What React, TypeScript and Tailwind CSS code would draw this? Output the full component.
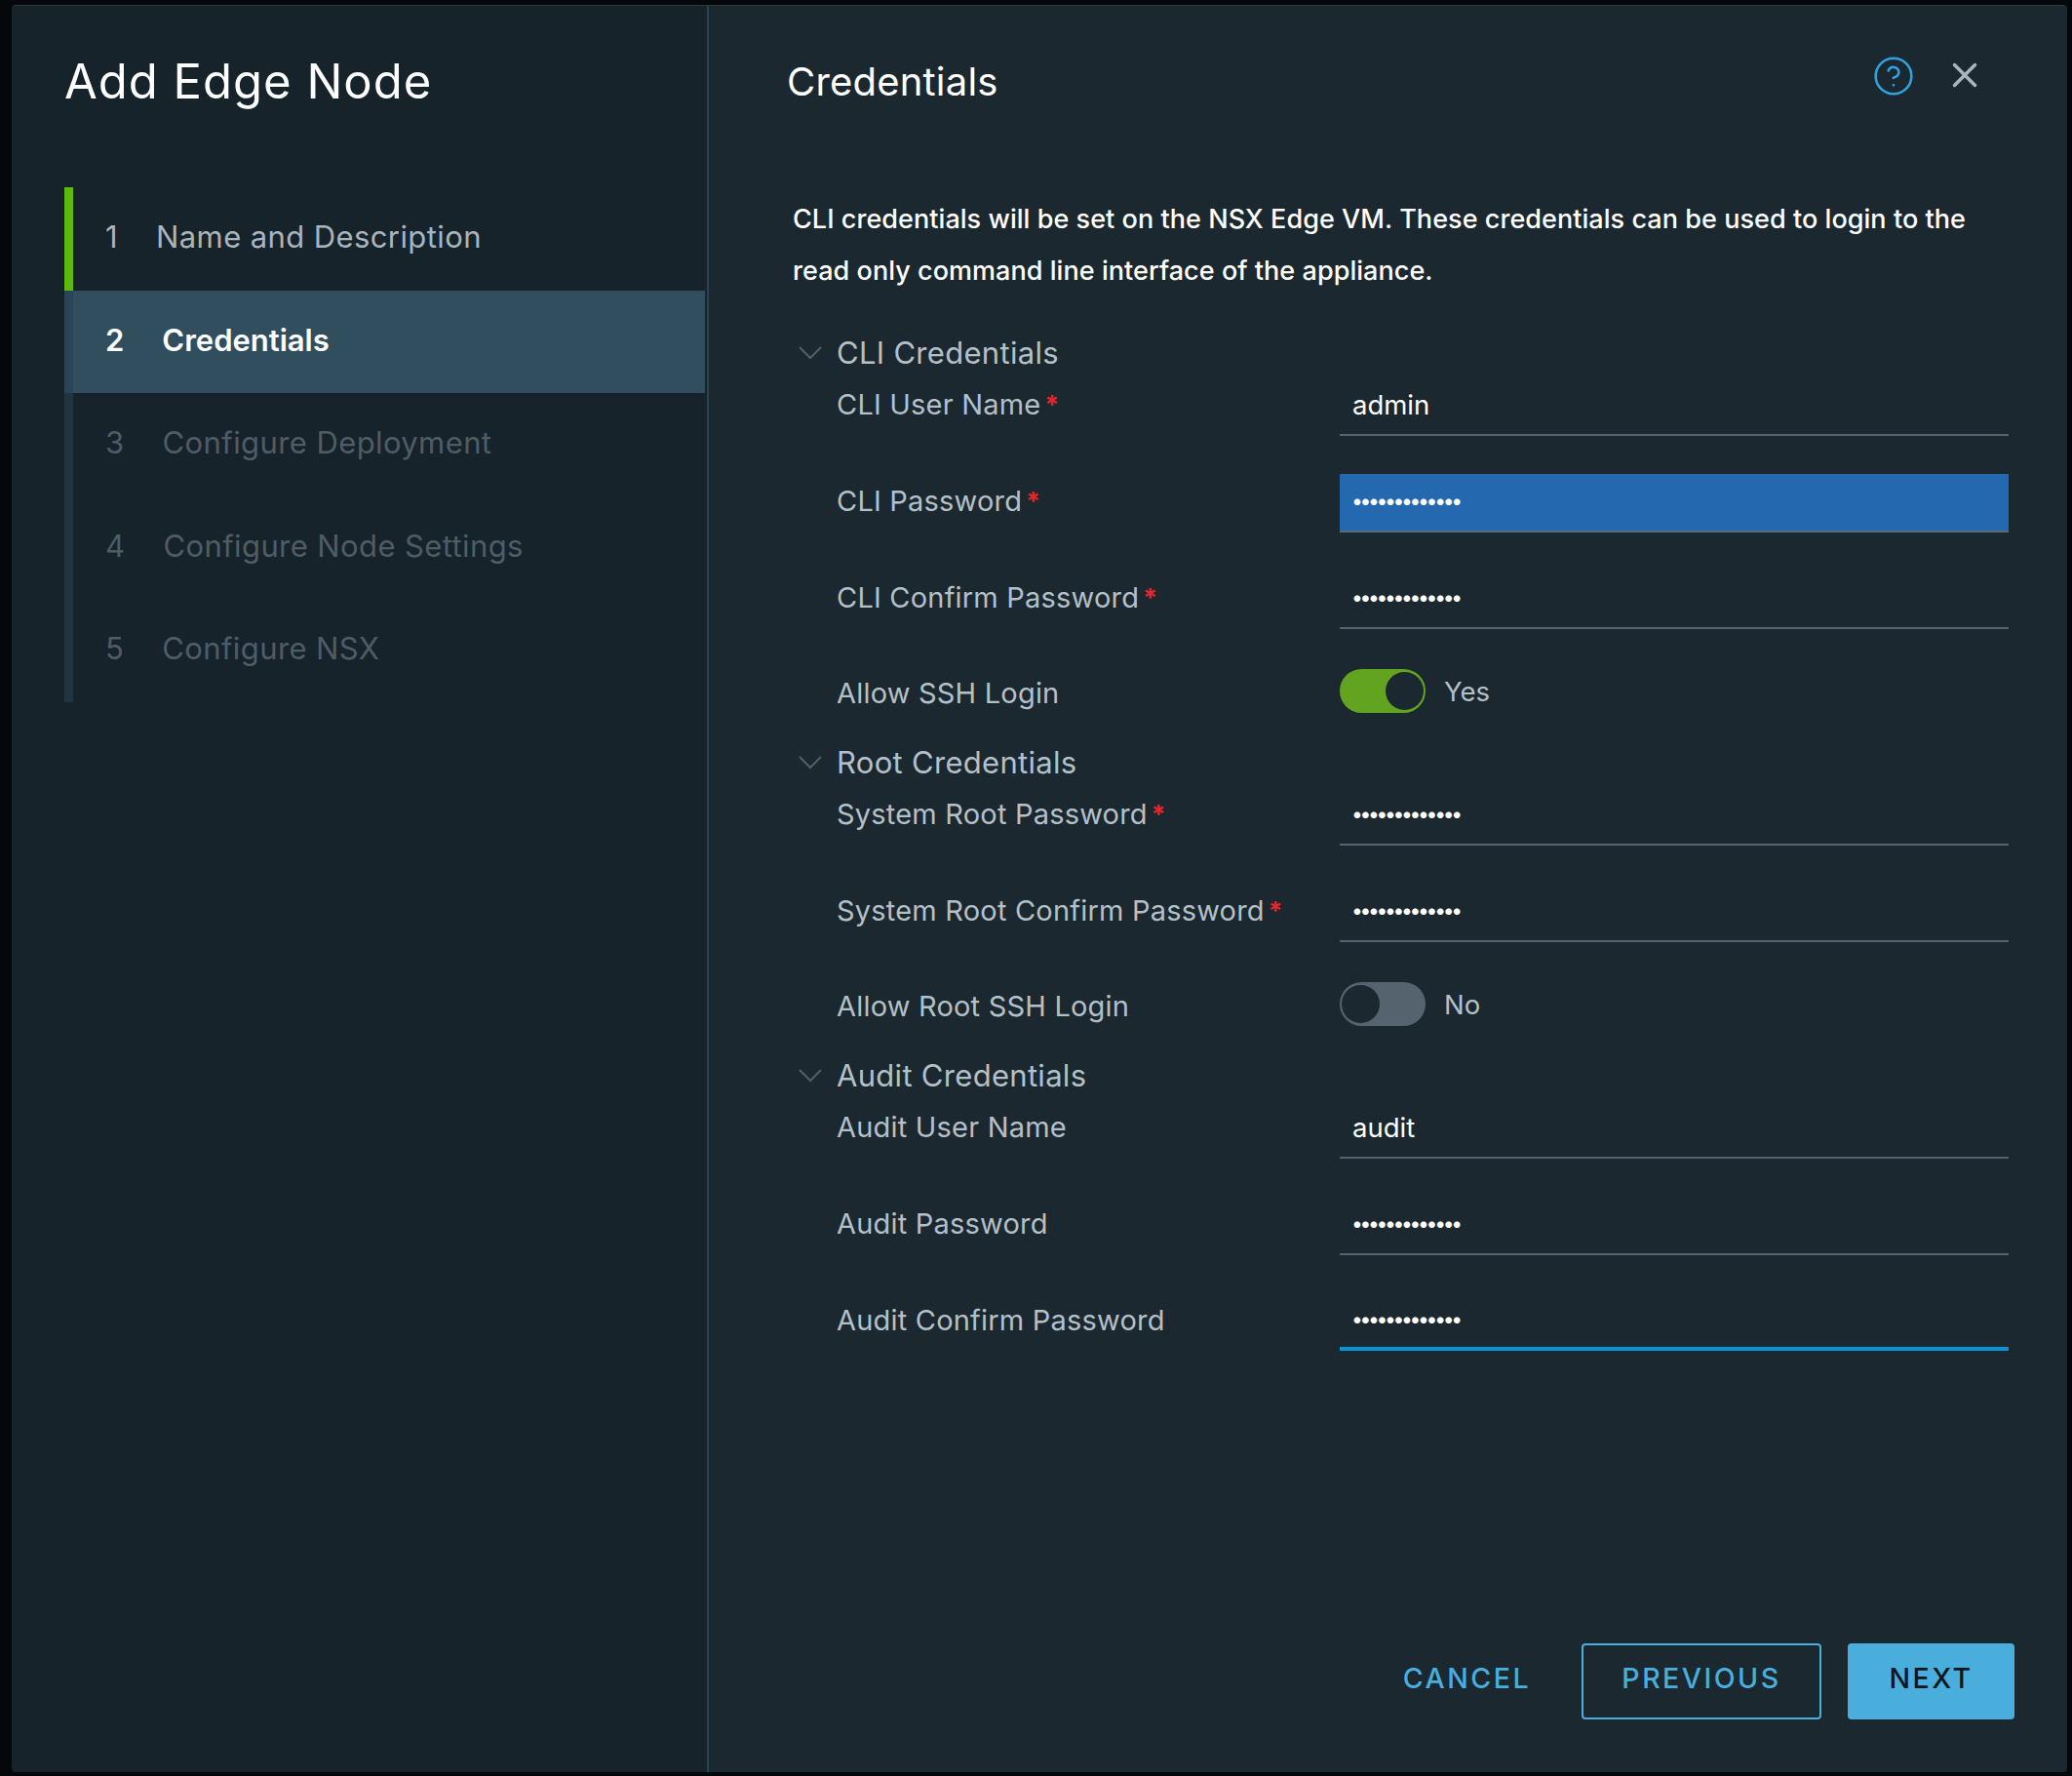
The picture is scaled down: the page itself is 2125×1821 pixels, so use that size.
import React from "react";
import { CircleHelp, X } from "lucide-react";

const steps = [
  { n: "1", label: "Name and Description", state: "done" },
  { n: "2", label: "Credentials", state: "active" },
  { n: "3", label: "Configure Deployment", state: "todo" },
  { n: "4", label: "Configure Node Settings", state: "todo" },
  { n: "5", label: "Configure NSX", state: "todo" },
];

function Step({ n, label, state }: { n: string; label: string; state: string }) {
  if (state === "active") {
    return (
      <div className="flex h-[105.5px] border-l-[9px] border-[#2a4555] bg-[#314e5f] items-center pl-[33px] pb-[3px] gap-[39px] text-white font-semibold tracking-[0px]">
        <span>{n}</span>
        <span>{label}</span>
      </div>
    );
  }
  if (state === "done") {
    return (
      <div className="flex h-[105.5px] border-l-[9px] border-[#5fb80e] items-center pl-[33px] pb-[3px] gap-[39px] text-[#aab4bb]">
        <span>{n}</span>
        <span>{label}</span>
      </div>
    );
  }
  return (
    <div className="flex h-[105.5px] border-l-[9px] border-[#22343f] items-center pl-[33px] pb-[3px] gap-[39px] text-[#4f5c65]">
      <span>{n}</span>
      <span>{label}</span>
    </div>
  );
}

function SectionTitle({ title }: { title: string }) {
  return (
    <div className="flex h-[50px] items-center">
      <svg className="w-[24px] h-[14px] mr-[15px] text-[#50606a]" viewBox="0 0 24 14" fill="none" stroke="currentColor" strokeWidth="2">
        <path d="M1 1l11 11L23 1" />
      </svg>
      <span className="text-[31px] tracking-[0.3px] text-[#b4c0c8]">{title}</span>
    </div>
  );
}

function Field({ label, required, value, password, focus, active }: { label: string; required?: boolean; value: string; password?: boolean; focus?: boolean; active?: boolean }) {
  return (
    <div className="flex h-[60px] mb-[39px] items-center pl-[39px]">
      <label className="w-[516px] pb-[4px] text-[29px] tracking-[0.2px] text-[#b4c0c8]">
        {label}
        {required && <span className="ml-[4px] text-[26px] text-[#e5252a] font-bold relative -top-[1px]">*</span>}
      </label>
      <input
        readOnly
        type={password ? "password" : "text"}
        defaultValue={value}
        className={`flex-1 pb-[3px] text-white outline-none ${active ? "h-[59px] self-start" : "h-[60px]"} ${password ? "pl-[12px] text-[21px] tracking-[-3.3px]" : "pl-[13px] text-[27.5px]"} ${focus ? "bg-[#2468b0] border-b-2 border-[#5a6a75]" : active ? "bg-transparent border-b-4 border-[#0794d4]" : "bg-transparent border-b-2 border-[#55636e]"}`}
      />
    </div>
  );
}

function ToggleRow({ label, on }: { label: string; on?: boolean }) {
  return (
    <div className="flex h-[73px] items-start pl-[39px]">
      <label className="w-[516px] text-[29px] tracking-[0.2px] text-[#b4c0c8] leading-[54px]">{label}</label>
      <div className="flex items-center mt-[2px]">
        <div className={`w-[88px] h-[45px] rounded-full border-2 flex items-center ${on ? "bg-[#62a420] border-[#62a420] justify-end" : "bg-[#55636e] border-[#55636e] justify-start"}`}>
          <div className="w-[39px] h-[39px] rounded-full bg-[#1b2830]" />
        </div>
        <span className="ml-[19px] pt-[3px] text-[27.5px] text-[#b4c0c8]">{on ? "Yes" : "No"}</span>
      </div>
    </div>
  );
}

export default function App() {
  return (
    <div className="h-screen bg-[#04080a] pl-[12px] pr-[5px] pt-[5px] pb-[4px] font-['Inter','Liberation_Sans',sans-serif]">
      <div className="flex h-full rounded-[4px] overflow-hidden border-t border-[#33383b]">
        <aside className="w-[715px] bg-[#17232b] border-r-2 border-[#2c4250] pl-[54px] pr-[2px] shrink-0">
          <h1 className="mt-[50px] h-[136px] text-[49px] leading-[56px] tracking-[1px] text-white font-normal">Add Edge Node</h1>
          <div className="text-[31px] tracking-[0.4px]">
            {steps.map((s) => (
              <Step key={s.n} n={s.n} label={s.label} state={s.state} />
            ))}
          </div>
        </aside>
        <main className="flex-1 flex flex-col bg-[#1b2830] pl-[80px] pr-[60px]">
          <header className="flex justify-between h-[192px] shrink-0">
            <h2 className="mt-[59px] text-[40px] leading-[37px] tracking-[0.2px] text-white font-normal">Credentials</h2>
            <div className="flex items-center h-[48px] mt-[48px] gap-[30px] mr-[24px]">
              <CircleHelp className="w-[44px] h-[44px] text-[#2ea3dc]" strokeWidth={1.4} />
              <X className="w-[42px] h-[42px] -mt-[2px] text-[#a9b6be]" strokeWidth={2} />
            </div>
          </header>
          <p className="pl-[6px] text-[27px] leading-[53px] tracking-[0.05px] text-white font-medium">
            CLI credentials will be set on the NSX Edge VM. These credentials can be used to login to the
            <br />
            read only command line interface of the appliance.
          </p>
          <div className="pl-[12px] mt-[33px]">
            <SectionTitle title="CLI Credentials" />
            <Field label="CLI User Name" required value="admin" />
            <Field label="CLI Password" required value="abcdefghijklm" password focus />
            <Field label="CLI Confirm Password" required value="abcdefghijklm" password />
            <ToggleRow label="Allow SSH Login" on />
            <SectionTitle title="Root Credentials" />
            <Field label="System Root Password" required value="abcdefghijklm" password />
            <Field label="System Root Confirm Password" required value="abcdefghijklm" password />
            <ToggleRow label="Allow Root SSH Login" />
            <SectionTitle title="Audit Credentials" />
            <Field label="Audit User Name" value="audit" />
            <Field label="Audit Password" value="abcdefghijklm" password />
            <Field label="Audit Confirm Password" value="abcdefghijklm" password active />
          </div>
          <footer className="mt-auto mb-[54px] -mr-[6px] flex justify-end items-center text-[28.5px] font-medium tracking-[2.5px]">
            <button className="mr-[52px] pb-[6px] text-[#49aedb]">CANCEL</button>
            <button className="w-[246px] h-[78px] pb-[6px] rounded-[4px] border-2 border-[#49aedb] text-[#49aedb] mr-[27px]">PREVIOUS</button>
            <button className="w-[171px] h-[78px] pb-[6px] rounded-[4px] bg-[#49aedb] text-[#0b1820]">NEXT</button>
          </footer>
        </main>
      </div>
    </div>
  );
}
